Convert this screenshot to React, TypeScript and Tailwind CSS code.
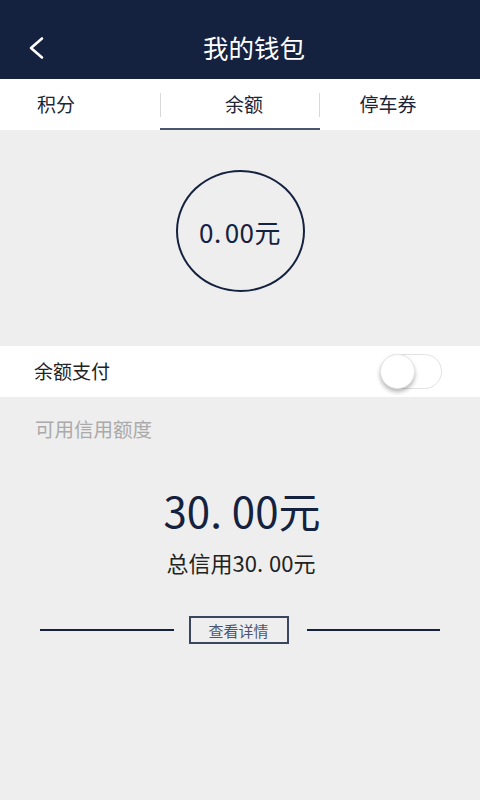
import React from "react";

const font = { fontFamily: '"Noto Sans CJK SC", "Noto Sans", sans-serif' };

export default function App() {
  return (
    <div className="w-[480px] h-[800px] bg-[#eeeeee] flex flex-col" style={font}>
      {/* Header */}
      <div className="h-[79px] bg-[#15223f] flex flex-col justify-end shrink-0">
        <div className="h-[58px] relative flex items-center justify-center">
          <svg className="absolute left-[27px] top-[15px]" width="18" height="24" viewBox="0 0 18 24">
            <polyline points="15,2.5 4,12 15,21.5" fill="none" stroke="#ffffff" strokeWidth="2.6" strokeLinecap="round" strokeLinejoin="round" />
          </svg>
          <span className="text-white text-[25.5px] leading-none mt-[-6px] ml-[28px]">我的钱包</span>
        </div>
      </div>

      {/* Tabs */}
      <div className="h-[51px] bg-white flex shrink-0">
        <div className="w-[160px] flex items-center pl-[37px]">
          <span className="text-[19px] text-[#1c2436]">积分</span>
        </div>
        <div className="w-[160px] relative flex items-center justify-center pl-[8px] border-b-2 border-[#4a5570]">
          <div className="absolute left-0 top-[14px] h-[24px] w-px bg-[#d9d9d9]" />
          <div className="absolute right-0 top-[14px] h-[24px] w-px bg-[#d9d9d9]" />
          <span className="text-[19px] text-[#1c2436] mt-[2px]">余额</span>
        </div>
        <div className="w-[160px] flex items-center justify-center pr-[24px]">
          <span className="text-[19px] text-[#1c2436]">停车券</span>
        </div>
      </div>

      {/* Balance circle */}
      <div className="h-[216px] flex justify-center pt-[40px] shrink-0">
        <div className="w-[129px] h-[122px] shrink-0 rounded-[50%] border-2 border-[#15223f] flex items-center justify-center">
          <span className="text-[26px] text-[#15223f] tracking-[0.5px]">
            0.<span className="ml-[3px]">00元</span>
          </span>
        </div>
      </div>

      {/* Balance pay row */}
      <div className="h-[51px] bg-white flex items-center justify-between pl-[34px] pr-[38px] shrink-0">
        <span className="text-[19px] text-[#222222]">余额支付</span>
        <div className="w-[62px] h-[35px] rounded-full border border-[#e2e2e2] bg-white relative">
          <div className="absolute left-[-1px] top-[-1px] w-[35px] h-[35px] rounded-full bg-white border border-[#e6e6e6] shadow-[0_3px_4px_rgba(0,0,0,0.28)]" />
        </div>
      </div>

      {/* Credit */}
      <div className="pl-[35px] pt-[17px]">
        <span className="text-[19.5px] text-[#aaaaaa]">可用信用额度</span>
      </div>

      <div className="flex flex-col items-center mt-[46px]">
        <span className="text-[42px] leading-none text-[#15223f] pl-[4px]">
          30.<span className="ml-[10px]">00元</span>
        </span>
        <span className="text-[22px] leading-none text-[#222222] mt-[20px] pl-[2px]">
          总信用30.<span className="ml-[6px]">00元</span>
        </span>
      </div>

      <div className="flex items-center justify-center mt-[43px] px-[40px]">
        <div className="flex-1 h-[2px] bg-[#15223f]" />
        <div className="mx-[15px] w-[100px] h-[28px] border-2 border-[#3a4560] flex items-center justify-center">
          <span className="text-[15px] text-[#4a5570] leading-none">查看详情</span>
        </div>
        <div className="flex-1 h-[2px] bg-[#15223f] ml-[3px]" />
      </div>
    </div>
  );
}
